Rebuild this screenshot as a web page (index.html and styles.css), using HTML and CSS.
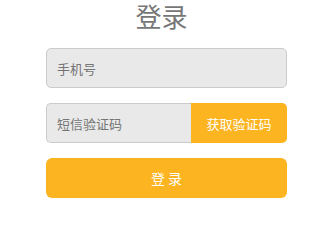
FILE: index.html
```html
<!DOCTYPE html>
<html lang="zh">
<head>
<meta charset="utf-8">
<link rel="stylesheet" href="styles.css">
</head>
<body>
<div class="page">
  <h1 class="title">登录</h1>
  <form class="form">
    <div class="field">
      <input class="input" type="text" placeholder="手机号">
    </div>
    <div class="field group">
      <input class="input input-left" type="text" placeholder="短信验证码">
      <button type="button" class="code-btn">获取验证码</button>
    </div>
    <button type="button" class="login-btn">登 录</button>
  </form>
</div>
</body>
</html>
```
FILE: styles.css
```css
* { box-sizing: border-box; }
html, body { margin: 0; padding: 0; background: #fff; }
body { font-family: "Noto Sans CJK SC", "Noto Sans", sans-serif; }
.page { width: 327px; height: 210px; padding-left: 46px; }
.title {
  margin: 0;
  width: 231px;
  height: 42px;
  padding-top: 0;
  text-align: center;
  font-size: 26px;
  font-weight: 400;
  line-height: 32px;
  color: #777;
}
.form { width: 241px; display: flex; flex-direction: column; padding-top: 6px; }
.field { display: flex; height: 40px; margin-bottom: 15px; }
.input {
  flex: 1;
  min-width: 0;
  height: 40px;
  border: 1px solid #cbcbcb;
  border-radius: 5px;
  background: #e9e9e9;
  padding: 0 10px;
  font-family: inherit;
  font-size: 13px;
  color: #555;
  outline: none;
}
.input::placeholder { color: #757575; }
.input-left { border-radius: 5px 0 0 5px; border-right: none; }
.code-btn {
  width: 96px;
  height: 40px;
  border: none;
  border-radius: 0 5px 5px 0;
  background: #fdb421;
  color: #fff;
  font-family: inherit;
  font-size: 13px;
  padding: 0;
}
.login-btn {
  height: 40px;
  border: none;
  border-radius: 6px;
  background: #fdb421;
  color: #fff;
  font-family: inherit;
  font-size: 14px;
  padding: 0;
}
```
